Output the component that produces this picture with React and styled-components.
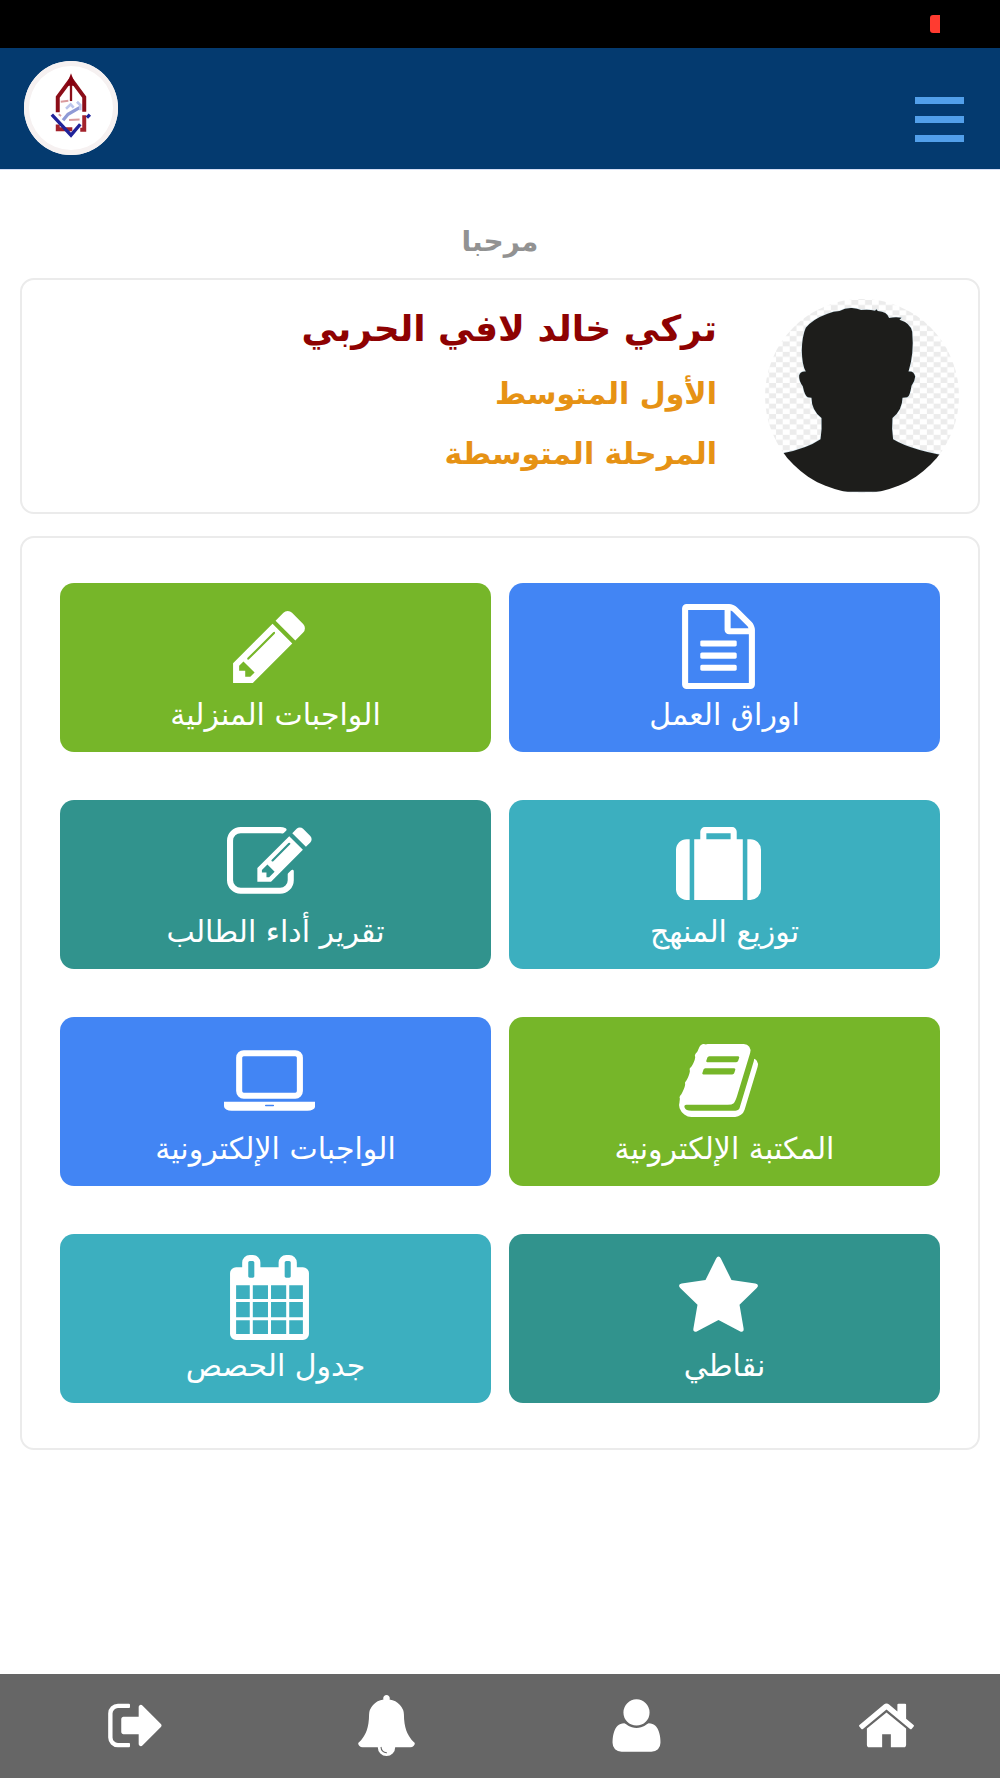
import React from "react";
import styled, { createGlobalStyle } from "styled-components";

const icons = {
  file: "M1468 380q28 28 48 76t20 88v1152q0 40-28 68t-68 28H96q-40 0-68-28t-28-68V96Q0 56 28 28T96 0h896q40 0 88 20t76 48zm-444-244v376h376q-10-29-22-41l-313-313q-12-12-41-22zm384 1528V640H992q-40 0-68-28t-28-68V128H128v1536h1280zM384 800q0-14 9-23t23-9h704q14 0 23 9t9 23v64q0 14-9 23t-23 9H416q-14 0-23-9t-9-23v-64zm736 224q14 0 23 9t9 23v64q0 14-9 23t-23 9H416q-14 0-23-9t-9-23v-64q0-14 9-23t23-9h704zm0 256q14 0 23 9t9 23v64q0 14-9 23t-23 9H416q-14 0-23-9t-9-23v-64q0-14 9-23t23-9h704z",
  pencil:
    "M491 1536l91-91-235-235-91 91v107h128v128h107zm523-928q0-22-22-22-10 0-17 7l-542 542q-7 7-7 17 0 22 22 22 10 0 17-7l542-542q7-7 7-17zm-54-192l416 416-832 832h-416v-416zm683 96q0 53-37 90l-166 166-416-416 166-165q36-38 90-38 53 0 91 38l235 234q37 39 37 91z",
  edit: "M888 1184l116-116-152-152-116 116v56h96v96h56zm440-720q-16-16-33 1l-350 350q-17 17-1 33t33-1l350-350q17-17 1-33zm80 594v190q0 119-84.5 203.5t-203.5 84.5h-832q-119 0-203.500-84.500t-84.500-203.500v-832q0-119 84.500-203.500t203.500-84.500h832q63 0 117 25 15 7 18 23 3 17-9 29l-49 49q-14 14-32 8-23-6-45-6h-832q-66 0-113 47t-47 113v832q0 66 47 113t113 47h832q66 0 113-47t47-113v-126q0-13 9-22l64-64q15-15 35-7t20 29zm-96-738l288 288-672 672h-288v-288zm444 132l-92 92-288-288 92-92q28-28 68-28t68 28l152 152q28 28 28 68t-28 68z",
  suitcase:
    "M640 256v128h512V256H640zM288 384v1280h-64q-92 0-158-66T0 1440V608q0-92 66-158t158-66zM1408 384v1280H384V384h128V224q0-40 28-68t68-28h576q40 0 68 28t28 68v160zM1792 608v832q0 92-66 158t-158 66h-64V384h64q92 0 158 66t66 158z",
  book: "M1703 478q40 57 18 129l-275 906q-19 64-76.500 107.500t-122.500 43.500h-923q-77 0-148.500-53.500t-99.500-131.500q-24-67-2-127 0-4 3-27t4-37q1-8-3-21.500t-3-19.500q2-11 8-21t16.500-23.500 16.500-23.500q23-38 45-91.500t30-91.500q3-10 .5-30t-.5-28q3-11 17-28t17-23q21-36 42-92t25-90q1-9-2.500-32t.5-28q4-13 22-30.500t22-22.500q19-26 42.500-84.500t27.500-96.500q1-8-3-25.500t-2-26.500q2-8 9-18t18-23 17-21q8-12 16.500-30.500t15-35 16-36 19.500-32 26.500-23.500 36-11.500 47.500 5.500l-1 3q38-9 51-9h761q74 0 114 56t18 130l-274 906q-36 119-71.500 153.500t-128.500 34.500h-869q-27 0-38 15-11 16-1 43 24 70 144 70h923q29 0 56-15.500t35-41.500l300-987q7-22 5-57 38 15 59 43zm-1064 2q-4 13 2 22.500t20 9.500h608q13 0 25.500-9.500t16.500-22.500l21-64q4-13-2-22.500t-20-9.500h-608q-13 0-25.500 9.500t-16.500 22.500zm-83 256q-4 13 2 22.500t20 9.500h608q13 0 25.500-9.500t16.500-22.500l21-64q4-13-2-22.500t-20-9.500h-608q-13 0-25.500 9.500t-16.500 22.500z",
  laptop:
    "M416 1280q-66 0-113-47t-47-113v-704q0-66 47-113t113-47h1088q66 0 113 47t47 113v704q0 66-47 113t-113 47h-1088zm-32-864v704q0 13 9.500 22.500t22.500 9.500h1088q13 0 22.500-9.500t9.500-22.500v-704q0-13-9.500-22.500t-22.500-9.500h-1088q-13 0-22.500 9.500t-9.500 22.500zm1376 928h160v96q0 40-47 68t-113 28h-1600q-66 0-113-28t-47-68v-96h1760zm-720 96q16 0 16-16t-16-16h-160q-16 0-16 16t16 16h160z",
  star: "M1728 647q0 22-26 48l-363 354 86 500q1 7 1 20 0 21-10.500 35.500t-30.500 14.500q-19 0-40-12l-449-236-449 236q-22 12-40 12-21 0-31.500-14.500t-10.500-35.500q0-6 2-20l86-500-364-354q-25-27-25-48 0-37 56-46l502-73 225-455q19-41 49-41t49 41l225 455 502 73q56 9 56 46z",
  calendar:
    "M192 1664h288v-288h-288v288zm352 0h320v-288h-320v288zm-352-352h288v-320h-288v320zm352 0h320v-320h-320v320zm-352-384h288v-288h-288v288zm736 736h320v-288h-320v288zm-384-736h320v-288h-320v288zm768 736h288v-288h-288v288zm-384-352h320v-320h-320v320zm-352-864v-288q0-13-9.500-22.500t-22.500-9.500h-64q-13 0-22.500 9.500t-9.500 22.500v288q0 13 9.500 22.500t22.500 9.500h64q13 0 22.500-9.500t9.500-22.500zm736 864h288v-320h-288v320zm-384-384h320v-288h-320v288zm384 0h288v-288h-288v288zm32-480v-288q0-13-9.500-22.500t-22.500-9.500h-64q-13 0-22.500 9.500t-9.500 22.500v288q0 13 9.500 22.500t22.500 9.500h64q13 0 22.500-9.500t9.500-22.500zm384-64v1280q0 52-38 90t-90 38h-1408q-52 0-90-38t-38-90v-1280q0-52 38-90t90-38h128v-96q0-66 47-113t113-47h64q66 0 113 47t47 113v96h384v-96q0-66 47-113t113-47h64q66 0 113 47t47 113v96h128q52 0 90 38t38 90z",
  home: "M1472 992v480q0 26-19 45t-45 19h-384v-384h-256v384h-384q-26 0-45-19t-19-45v-480q0-1 .5-3t.5-3l575-474 575 474q1 2 1 6zm223-69l-62 74q-8 9-21 11h-3q-13 0-21-7l-692-577-692 577q-12 8-24 7-13-2-21-11l-62-74q-8-10-7-23.500t11-21.500l719-599q32-26 76-26t76 26l244 204v-195q0-14 9-23t23-9h192q14 0 23 9t9 23v408l219 182q10 8 11 21.500t-7 23.500z",
  user: "M1600 1405q0 120-73 189.500t-194 69.500h-874q-121 0-194-69.500t-73-189.500q0-53 3.500-103.500t14-109 26.500-108.500 43-97.500 62-81 85.500-53.500 111.500-20q9 0 42 21.500t74.500 48 108 48 133.500 21.500 133.500-21.500 108-48 74.500-48 42-21.500q61 0 111.500 20t85.500 53.500 62 81 43 97.500 26.500 108.500 14 109 3.500 103.500zm-320-893q0 159-112.500 271.500t-271.500 112.500-271.500-112.500-112.500-271.500 112.500-271.500 271.500-112.500 271.500 112.500 112.500 271.500z",
  bell: "M912 1696q0-16-16-16-59 0-101.500-42.500t-42.500-101.500q0-16-16-16t-16 16q0 73 51.500 124.500t124.500 51.500q16 0 16-16zm816-288q0 52-38 90t-90 38h-448q0 106-75 181t-181 75-181-75-75-181h-448q-52 0-90-38t-38-90q50-42 91-88t85-119.500 74.500-158.500 50-206 19.500-260q0-152 117-282.500t307-158.500q-8-19-8-39 0-40 28-68t68-28 68 28 28 68q0 20-8 39 190 28 307 158.500t117 282.500q0 139 19.500 260t50 206 74.500 158.500 85 119.500 91 88z",
  logout:
    "M704 1440q0 4 1 20t.5 26.500-3 23.500-10 19.500-20.500 6.500h-320q-119 0-203.500-84.500t-84.500-203.500v-704q0-119 84.500-203.500t203.500-84.500h320q13 0 22.500 9.500t9.500 22.500q0 4 1 20t.5 26.500-3 23.500-10 19.500-20.500 6.500h-320q-66 0-113 47t-47 113v704q0 66 47 113t113 47h312l11.500 1 11.500 3 8 5.500 7 9 2 13.500zm928-544q0 26-19 45l-544 544q-19 19-45 19t-45-19-19-45v-288h-448q-26 0-45-19t-19-45v-384q0-26 19-45t45-19h448v-288q0-26 19-45t45-19 45 19l544 544q19 19 19 45z",
};

const tiles = [
  { id: 1, text: "اوراق العمل", icon: "file", box: "-128 0 1792 1792", color: "#4285f4" },
  { id: 2, text: "الواجبات المنزلية", icon: "pencil", color: "#76b629" },
  { id: 3, text: "توزيع المنهج", icon: "suitcase", color: "#3cafbf" },
  { id: 4, text: "تقرير أداء الطالب", icon: "edit", color: "#31938d" },
  { id: 5, text: "المكتبة الإلكترونية", icon: "book", color: "#76b629" },
  { id: 6, text: "الواجبات الإلكترونية", icon: "laptop", box: "0 0 1920 1792", color: "#4285f4" },
  { id: 7, text: "نقاطي", icon: "star", color: "#31938d" },
  { id: 8, text: "جدول الحصص", icon: "calendar", color: "#3cafbf" },
];

const links = [
  { id: 1, icon: "home", label: "الرئيسية" },
  { id: 2, icon: "user", label: "الملف الشخصي" },
  { id: 3, icon: "bell", label: "التنبيهات" },
  { id: 4, icon: "logout", label: "تسجيل الخروج" },
];

const Icon = ({ name, box = "0 0 1792 1792" }) => (
  <svg viewBox={box} aria-hidden="true">
    <path fill="currentColor" d={icons[name]} />
  </svg>
);

const SchoolLogo = () => (
  <svg viewBox="72 181 284 284" aria-hidden="true">
    <g fill="none" strokeWidth="12">
      <path stroke="#8c0d18" d="M174 336V290L214 236L254 290V334" />
      <path stroke="#8c0d18" strokeWidth="7" d="M214 240V302" />
      <path stroke="#a3222b" d="M174 373V387H218M242 389H254V345" />
      <path stroke="#20239a" strokeWidth="10" d="M156 343L214 405L242 372M262 352L271 343" />
      <path stroke="#d99a9d" strokeWidth="6" d="M183 304L206 301M177 342L184 347M208 359L240 358" />
      <path stroke="#8f9ad6" strokeWidth="10" d="M190 360L205 342L240 322" />
      <path stroke="#bcc6ec" strokeWidth="8" d="M199 325L213 312L222 322M232 304L242 314V330" />
    </g>
    <path fill="#86000f" d="M214 218L228 256H200Z" />
  </svg>
);

const AvatarPicture = () => (
  <svg viewBox="75 86 580 580" role="img" aria-label="صورة الطالب">
    <defs>
      <pattern id="checks" x="67" y="89" width="41" height="31" patternUnits="userSpaceOnUse">
        <path fill="#ececec" d="M20 0h21v15H20zM0 15h20v16H0z" />
      </pattern>
    </defs>
    <path fill="#fff" d="M75 86h580v580H75z" />
    <path fill="url(#checks)" d="M75 86h580v580H75z" />
    <path
      fill="#1d1d1b"
      stroke="#d3e6f0"
      strokeWidth="3"
      paintOrder="stroke"
      d="M90 553L128 547Q200 533 241 505Q246 476 244 442Q214 418 214 381L203 380Q194 376 188 347Q176 331 177 315Q181 301 197 303Q186 285 185 240Q186 197 197 172Q218 146 262 130Q280 123 298 122Q315 112 335 113Q352 114 362 119Q385 116 404 121L408 117L412 122Q440 124 446 143Q465 138 483 142L477 148Q510 158 515 184Q521 250 504 303Q520 300 524 318Q523 333 513 345Q508 377 500 380L486 381Q486 416 456 442Q453 476 458 505Q515 540 650 560V662H90Z"
    />
  </svg>
);

export default function App() {
  return (
    <>
      <GlobalStyle />
      <Page dir="rtl" lang="ar">
        <StatusBar>
          <Battery />
        </StatusBar>
        <Header>
          <MenuButton type="button" aria-label="القائمة">
            <span />
            <span />
            <span />
          </MenuButton>
          <Logo href="#" aria-label="المدرسة">
            <SchoolLogo />
          </Logo>
        </Header>
        <Main>
          <Welcome>مرحبا</Welcome>
          <Profile>
            <Avatar>
              <AvatarPicture />
            </Avatar>
            <div>
              <Name>تركي خالد لافي الحربي</Name>
              <Info>الأول المتوسط</Info>
              <Info>المرحلة المتوسطة</Info>
            </div>
          </Profile>
          <Tiles>
            {tiles.map((item) => {
              return (
                <Tile key={item.id} href="#" $color={item.color}>
                  <Icon name={item.icon} box={item.box} />
                  <span>{item.text}</span>
                </Tile>
              );
            })}
          </Tiles>
        </Main>
        <BottomNav>
          {links.map((item) => {
            return (
              <NavLink key={item.id} href="#" aria-label={item.label}>
                <Icon name={item.icon} />
              </NavLink>
            );
          })}
        </BottomNav>
      </Page>
    </>
  );
}

const GlobalStyle = createGlobalStyle`
  * {
    box-sizing: border-box;
  }
  body {
    margin: 0;
    background: #fff;
    font-family: "DejaVu Sans", "Noto Sans", sans-serif;
  }
  h1, h2, p {
    margin: 0;
  }
  a {
    text-decoration: none;
  }
  svg {
    display: block;
  }
`;

const Page = styled.div`
  display: flex;
  flex-direction: column;
  min-height: 100vh;
`;

const StatusBar = styled.div`
  display: flex;
  align-items: center;
  height: 48px;
  padding: 0 60px;
  background: #000;
`;

const Battery = styled.div`
  width: 10px;
  height: 18px;
  border-radius: 3px 0 0 3px;
  background: #ff3b30;
`;

const Header = styled.header`
  display: flex;
  align-items: center;
  justify-content: space-between;
  height: 122px;
  padding: 0 36px 2px 24px;
  background: #043a6f;
  border-bottom: 1px solid #d5def5;
`;

const MenuButton = styled.button`
  display: flex;
  flex-direction: column;
  gap: 12px;
  padding: 24px 0 0;
  border: 0;
  background: none;
  cursor: pointer;
  span {
    width: 49px;
    height: 7px;
    background: #529fea;
  }
`;

const Logo = styled.a`
  width: 94px;
  height: 94px;
  border-radius: 50%;
  background: #fff;
  box-shadow: inset 0 0 0 5px #f6f1f1;
`;

const Main = styled.main`
  padding: 48px 20px;
`;

const Welcome = styled.h2`
  font-size: 28px;
  line-height: 48px;
  margin-bottom: 12px;
  text-align: center;
  color: #929292;
`;

const Card = styled.section`
  border: 2px solid #ebebeb;
  border-radius: 14px;
`;

const Profile = styled(Card)`
  display: flex;
  gap: 48px;
  padding: 19px;
  margin-bottom: 22px;
  min-height: 236px;
`;

const Avatar = styled.div`
  flex: none;
  width: 194px;
  height: 194px;
  border-radius: 50%;
  overflow: hidden;
`;

const Name = styled.h1`
  margin-bottom: 5px;
  font-size: 36px;
  line-height: 60px;
  color: #8e0202;
`;

const Info = styled.p`
  font-size: 30px;
  font-weight: bold;
  line-height: 60px;
  color: #e69214;
`;

const Tiles = styled(Card)`
  display: grid;
  grid-template-columns: 1fr 1fr;
  gap: 48px 18px;
  padding: 45px 38px;
`;

const Tile = styled.a`
  display: flex;
  flex-direction: column;
  align-items: center;
  height: 169px;
  padding-top: 21px;
  border-radius: 14px;
  color: #fff;
  background: ${(props) => props.$color};
  svg {
    height: 85px;
    margin-right: 12px;
  }
  span {
    font-size: 30px;
    line-height: 52px;
  }
`;

const BottomNav = styled.nav`
  display: grid;
  grid-template-columns: repeat(4, 1fr);
  height: 104px;
  margin-top: auto;
  background: #666;
`;

const NavLink = styled.a`
  display: flex;
  align-items: center;
  justify-content: center;
  padding: 0 0 2px 22px;
  color: #fff;
  svg {
    width: 61px;
    height: 61px;
  }
`;
